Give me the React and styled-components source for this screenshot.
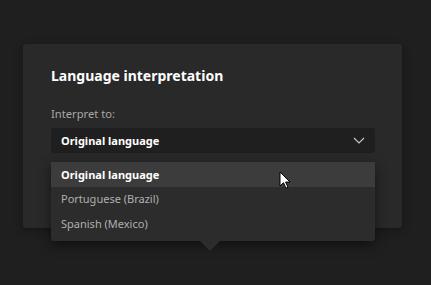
import styled, { createGlobalStyle } from 'styled-components'

const Global = createGlobalStyle`
  html, body {
    margin: 0;
    background: #1f1f1f;
    font-family: "Noto Sans", "Open Sans", sans-serif;
  }
`

const Page = styled.div`
  width: 431px;
  height: 285px;
  padding: 44px 0 0 23px;
  box-sizing: border-box;
  overflow: hidden;
`

const Dialog = styled.div`
  width: 379px;
  height: 184px;
  box-sizing: border-box;
  padding: 22px 27px 0 28px;
  background: #292929;
  border-radius: 3px;
  box-shadow: 0 2px 8px rgba(0, 0, 0, 0.35);
`

const Title = styled.h2`
  margin: 0;
  font-size: 14px;
  font-weight: 700;
  color: #ffffff;
  line-height: 20px;
`

const Label = styled.div`
  margin-top: 20px;
  font-size: 11.2px;
  color: #a8a8a8;
  line-height: 16px;
`

const Field = styled.div`
  position: relative;
  margin-top: 6px;
`

const Select = styled.div`
  height: 25px;
  display: flex;
  align-items: center;
  justify-content: space-between;
  padding: 0 10px;
  background: #1f1f1f;
  border-radius: 3px;
  font-size: 11px;
  font-weight: 700;
  color: #ffffff;
`

const Menu = styled.ul`
  position: absolute;
  left: 0;
  right: 0;
  top: 34px;
  margin: 0;
  padding: 0 0 5px;
  list-style: none;
  background: #2c2c2c;
  border-radius: 3px;
  box-shadow: 0 4px 12px rgba(0, 0, 0, 0.5);
  &::after {
    content: '';
    position: absolute;
    left: 149px;
    bottom: -10px;
    border-left: 10px solid transparent;
    border-right: 10px solid transparent;
    border-top: 10px solid #2c2c2c;
  }
`

const Item = styled.li`
  height: 24.5px;
  display: flex;
  align-items: center;
  padding: 0 10px;
  font-size: 11px;
  font-weight: ${p => (p.$active ? 700 : 400)};
  color: ${p => (p.$active ? '#ffffff' : '#b0b0b0')};
  background: ${p => (p.$active ? '#3c3c3c' : 'transparent')};
`

const Cursor = styled.svg`
  position: absolute;
  left: 228px;
  top: 9px;
`

const items = ['Original language', 'Portuguese (Brazil)', 'Spanish (Mexico)']

export default function App() {
  return (
    <Page>
      <Global />
      <Dialog>
        <Title>Language interpretation</Title>
        <Label>Interpret to:</Label>
        <Field>
          <Select>
            <span>Original language</span>
            <svg width="12" height="7" viewBox="0 0 12 7">
              <path d="M1 1l5 5 5-5" fill="none" stroke="#c8c8c8" strokeWidth="1.2" />
            </svg>
          </Select>
          <Menu>
            {items.map((t, i) => (
              <Item key={t} $active={i === 0}>{t}</Item>
            ))}
            <Cursor width="12" height="18" viewBox="0 0 12 18">
              <path d="M1 1v14l3.5-3.3 2.5 5.5 2-0.9-2.4-5.3H11z" fill="#fff" stroke="#000" strokeWidth="1" />
            </Cursor>
          </Menu>
        </Field>
      </Dialog>
    </Page>
  )
}
